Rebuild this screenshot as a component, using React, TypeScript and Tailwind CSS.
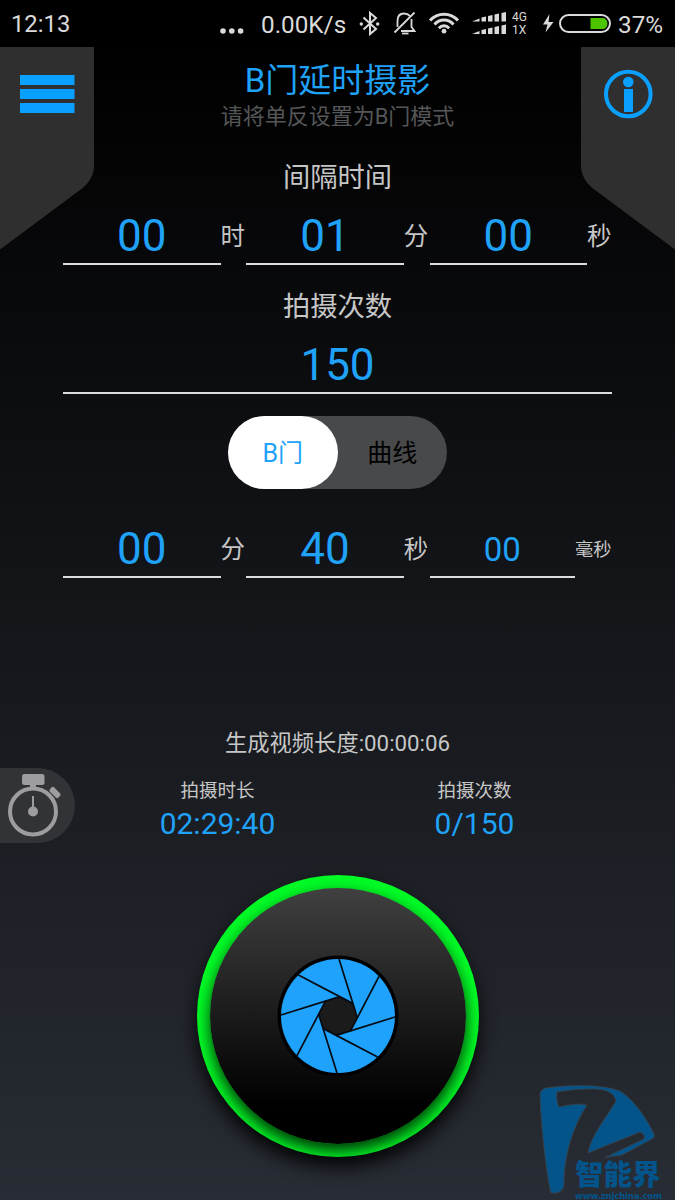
/**
 * Bulb time-lapse screen — interval, shot count, exposure and shutter dial.
 */
import { useState } from 'react';

const BLADE_ANGLES = [0, 45, 90, 135, 180, 225, 270, 315];

export default function App() {
  const [mode, setMode] = useState<'bulb' | 'curve'>('bulb');

  return (
    <div className="relative flex h-[1200px] w-[675px] flex-col overflow-hidden bg-black font-['Roboto','Noto_Sans_CJK_SC',sans-serif] text-[#c6c6c6]">
      <StatusBar />

      <main className="flex flex-1 flex-col bg-linear-to-b/srgb from-black to-[#282c34]">
        {/* Header, the side tabs hang below it */}
        <header className="flex h-[100px] justify-between">
          <button className="h-[203px] w-[94px]" aria-label="menu">
            <MenuTab />
          </button>
          <div className="flex flex-col items-center pt-3.5">
            <h1 className="h-10 text-[33px] leading-10 text-[#1fa2f8]">B门延时摄影</h1>
            <p className="mt-0.5 h-7 text-[22px] leading-7 text-[#555657]">请将单反设置为B门模式</p>
          </div>
          <button className="h-[203px] w-[94px]" aria-label="info">
            <InfoTab />
          </button>
        </header>

        {/* Settings */}
        <section className="flex flex-col px-[63px]">
          <Label text="间隔时间" className="mt-[11px]" />
          <div className="mt-[17px] flex">
            <Field value="00" unit="时" />
            <Field value="01" unit="分" />
            <Field value="00" unit="秒" />
          </div>

          <Label text="拍摄次数" className="mt-[22px]" />
          <div className="mt-[17px] h-[50px] border-b-2 border-[#dcdcdc] text-center text-[44px] leading-[43px] text-[#1fa2f8]">
            150
          </div>

          <div className="mt-[22px] flex h-[73px] w-[219px] self-center rounded-full bg-[#48494a] text-[25px]">
            <Segment text="B门" active={mode === 'bulb'} onClick={() => setMode('bulb')} />
            <Segment text="曲线" active={mode === 'curve'} onClick={() => setMode('curve')} />
          </div>

          <div className="mt-[39px] flex">
            <Field value="00" unit="分" />
            <Field value="40" unit="秒" />
            <Field value="00" unit="毫秒" small />
          </div>
        </section>

        {/* Summary */}
        <p className="mt-[149px] h-8 text-center text-[22.3px] leading-8">生成视频长度:00:00:06</p>
        <section className="mt-[9px] flex h-[75px]">
          <button className="w-[75px] rounded-r-full bg-[#323336]" aria-label="timer">
            <StopwatchIcon />
          </button>
          <div className="ml-[14px] flex">
            <Stat label="拍摄时长" value="02:29:40" />
            <Stat label="拍摄次数" value="0/150" />
          </div>
        </section>

        {/* Shutter dial */}
        <button
          className="mt-8 flex size-[282px] items-center justify-center self-center overflow-hidden rounded-full bg-[#00fb26] shadow-[0_10px_18px_0px_rgba(0,0,0,0.9)]"
          aria-label="start"
        >
          <span className="flex size-[256px] items-center justify-center rounded-full bg-linear-to-b/srgb from-[#404040] to-black to-85% shadow-[0_7px_15px_rgba(0,0,0,0.8)]">
            <ApertureIcon />
          </span>
        </button>
      </main>

      <Watermark />
    </div>
  );
}

// ── Controls ────────────────────────────────

function Label({ text, className }: { text: string; className: string }) {
  return <h2 className={`h-10 text-center text-[27.3px] leading-10 ${className}`}>{text}</h2>;
}

function Field({ value, unit, small }: { value: string; unit: string; small?: boolean }) {
  return (
    <div className="flex w-[183.3px] shrink-0">
      <div
        className={`h-[50px] border-b-2 border-[#dcdcdc] text-center text-[#1fa2f8] ${
          small ? 'w-[145.5px] text-[33px] leading-[44px]' : 'w-[157.5px] text-[44px] leading-[43px]'
        }`}
      >
        {value}
      </div>
      <span className={`whitespace-nowrap leading-[43px] ${small ? 'text-[18.3px]' : 'text-[24.5px]'}`}>{unit}</span>
    </div>
  );
}

function Segment({ text, active, onClick }: { text: string; active: boolean; onClick: () => void }) {
  return (
    <button
      onClick={onClick}
      className={`w-[110px] rounded-full pt-[3px] ${active ? 'bg-white text-[#1fa2f8]' : 'text-black'}`}
    >
      {text}
    </button>
  );
}

function Stat({ label, value }: { label: string; value: string }) {
  return (
    <div className="flex w-[257px] flex-col items-center pt-[9px]">
      <span className="h-[27px] text-[18.5px] leading-7">{label}</span>
      <span className="h-[38px] text-[30px] leading-10 text-[#1fa2f8]">{value}</span>
    </div>
  );
}

// ── Status bar ──────────────────────────────

function StatusBar() {
  return (
    <div className="flex h-[47px] shrink-0 items-center bg-black pl-[11px] text-[24.3px] leading-[47px] text-[#dadada]">
      <span className="w-[207px] pt-0.5 text-[23.8px]">12:13</span>
      <svg className="h-[47px] w-[28px]" viewBox="0 0 28 47" fill="currentColor">
        <circle cx="5" cy="31" r="2.8" />
        <circle cx="13.8" cy="31" r="2.8" />
        <circle cx="22.6" cy="31" r="2.8" />
      </svg>
      <span className="ml-[15px] w-[98px] pt-px">0.00K/s</span>

      {/* bluetooth */}
      <svg className="h-[47px] w-[22px]" viewBox="0 0 22 47" fill="none" stroke="currentColor" strokeWidth="2">
        <path d="M4.5 17.5L17 29L11 34V13L17 18L4.5 29.5" />
        <circle cx="2.3" cy="24" r="1.7" fill="currentColor" stroke="none" />
        <circle cx="18.7" cy="24" r="1.7" fill="currentColor" stroke="none" />
      </svg>

      {/* muted bell */}
      <svg className="ml-[12px] h-[47px] w-[24px]" viewBox="0 0 24 47" fill="none" stroke="currentColor" strokeWidth="1.8">
        <path d="M4.5 27V21C4.5 16 7 13.5 11 13.5C13.5 13.5 15.5 14.5 17 16" />
        <path d="M18.5 19V27L21.5 31H8" />
        <path d="M1.5 32.5L21.5 12.5" />
        <path d="M9 33.5H15.5" />
      </svg>

      {/* wifi */}
      <svg className="ml-[11px] h-[47px] w-[32px]" viewBox="0 0 32 47" fill="none" stroke="currentColor" strokeWidth="3">
        <path d="M2 20.5C9.5 12 22.5 12 30 20.5" />
        <path d="M6.5 24.5C11.5 18.5 20.5 18.5 25.5 24.5" />
        <path d="M10.8 28.2C13.8 25 18.2 25 21.2 28.2" />
        <circle cx="16" cy="31.2" r="2.4" fill="currentColor" stroke="none" />
      </svg>

      {/* signal, one row per SIM */}
      <svg className="ml-[12px] h-[47px] w-[36px]" viewBox="0 0 36 47" fill="currentColor">
        <path d="M0 21.5L7.5 18.5V21.5ZM9.5 17.5L14 16.5V21.5H9.5ZM16 16L20.5 15V21.5H16ZM22.5 14.5L27 13.5V21.5H22.5ZM29.5 13L34 12V21.5H29.5Z" />
        <path d="M0 34L7.5 31V34ZM9.5 30L14 29V34H9.5ZM16 28.5L20.5 27.5V34H16ZM22.5 27L27 26V34H22.5ZM29.5 25.5L34 24.5V34H29.5Z" />
      </svg>
      <span className="ml-[4px] flex w-[18px] flex-col text-[12px] leading-[13px]">
        <span>4G</span>
        <span>1X</span>
      </span>

      {/* charging battery */}
      <svg className="ml-[12px] h-[47px] w-[70px]" viewBox="0 0 70 47" fill="none">
        <path d="M7.5 14L1 24.5H5.5L3.5 32.5L11.5 22H6.5Z" fill="currentColor" />
        <rect x="18" y="15" width="50" height="17" rx="8.5" stroke="currentColor" strokeWidth="2" />
        <path d="M48.5 18H60.5C67 18 67 29 60.5 29H48.5Z" fill="#4cc400" />
      </svg>
      <span className="ml-[6px] pt-px">37%</span>
    </div>
  );
}

// ── Drawings ────────────────────────────────

function MenuTab() {
  return (
    <svg className="h-[203px] w-[94px]" viewBox="0 0 94 203">
      <path d="M0 0H94V119C94 128 89 136 82 141.5L0 202.5Z" fill="#2f2f2f" />
      <path d="M20 28H74.5V38H20ZM20 42H74.5V52H20ZM20 56H74.5V66H20Z" fill="#0aa0ff" />
    </svg>
  );
}

function InfoTab() {
  return (
    <svg className="h-[203px] w-[94px]" viewBox="0 0 94 203">
      <path d="M94 0H0V119C0 128 5 136 12 141.5L94 202.5Z" fill="#2f2f2f" />
      <circle cx="47.3" cy="47" r="22.3" fill="none" stroke="#0aa0ff" strokeWidth="4" />
      <circle cx="47.3" cy="35" r="5.3" fill="#0aa0ff" />
      <path d="M43 42H52V65H43Z" fill="#0aa0ff" />
    </svg>
  );
}

function StopwatchIcon() {
  return (
    <svg className="size-[75px]" viewBox="0 0 75 75" fill="#9d9d9f">
      <rect x="22" y="6" width="22.5" height="11" rx="2.5" />
      <path d="M30 16H36V21H30Z" />
      <circle cx="33" cy="43.5" r="23" fill="none" stroke="#9d9d9f" strokeWidth="4" />
      <path d="M32 28H34V42H32Z" />
      <circle cx="33" cy="43.5" r="5" />
      <rect x="49" y="21.5" width="12" height="6" rx="2" transform="rotate(45 55 24.5)" />
    </svg>
  );
}

function ApertureIcon() {
  return (
    <svg className="size-[122px]" viewBox="-61 -61 122 122">
      <circle r="60.5" fill="#000" />
      <circle r="57" fill="#1fa2fb" />
      <path
        d="M19.4 1.9L12.4 15.1L-1.9 19.4L-15.1 12.4L-19.4 -1.9L-12.4 -15.1L1.9 -19.4L15.1 -12.4Z"
        fill="#1b1b1b"
      />
      {BLADE_ANGLES.map((angle) => (
        <path key={angle} d="M1 -57L19.4 1.9" stroke="#050a12" strokeWidth="1.7" transform={`rotate(${angle})`} />
      ))}
    </svg>
  );
}

function Watermark() {
  return (
    <svg className="absolute right-0 bottom-0 h-[125px] w-[150px]" viewBox="0 0 150 125" fill="#03548b">
      <path
        d="M15 20C15 15 19 13 24 12.5C48 10 75 9 95 16C108 24 121 42 129 59C130 61 129 63 127 64L97 80L80 82.5L119 64C120 61 118 58 115 57L63 78C66 60 82 42 91 26C89 17 80 14 68 14C54 14 42 15 32 17C31 22 32 27 34 32C42 30 53 28 62 30C49 50 39 78 39 109C39 115 34 119 26 118C21 98 16 50 15 20Z"
        stroke="#3d4146"
        strokeWidth="0.8"
      />
      <text x="50" y="110" fontSize="28.5" fontWeight="900" fontFamily="'Noto Sans CJK SC', sans-serif">
        智能界
      </text>
      <text x="50" y="124" fontSize="8.6" fontWeight="700" textLength="87" fontFamily="'DejaVu Sans', sans-serif">
        www.znjchina.com
      </text>
    </svg>
  );
}
